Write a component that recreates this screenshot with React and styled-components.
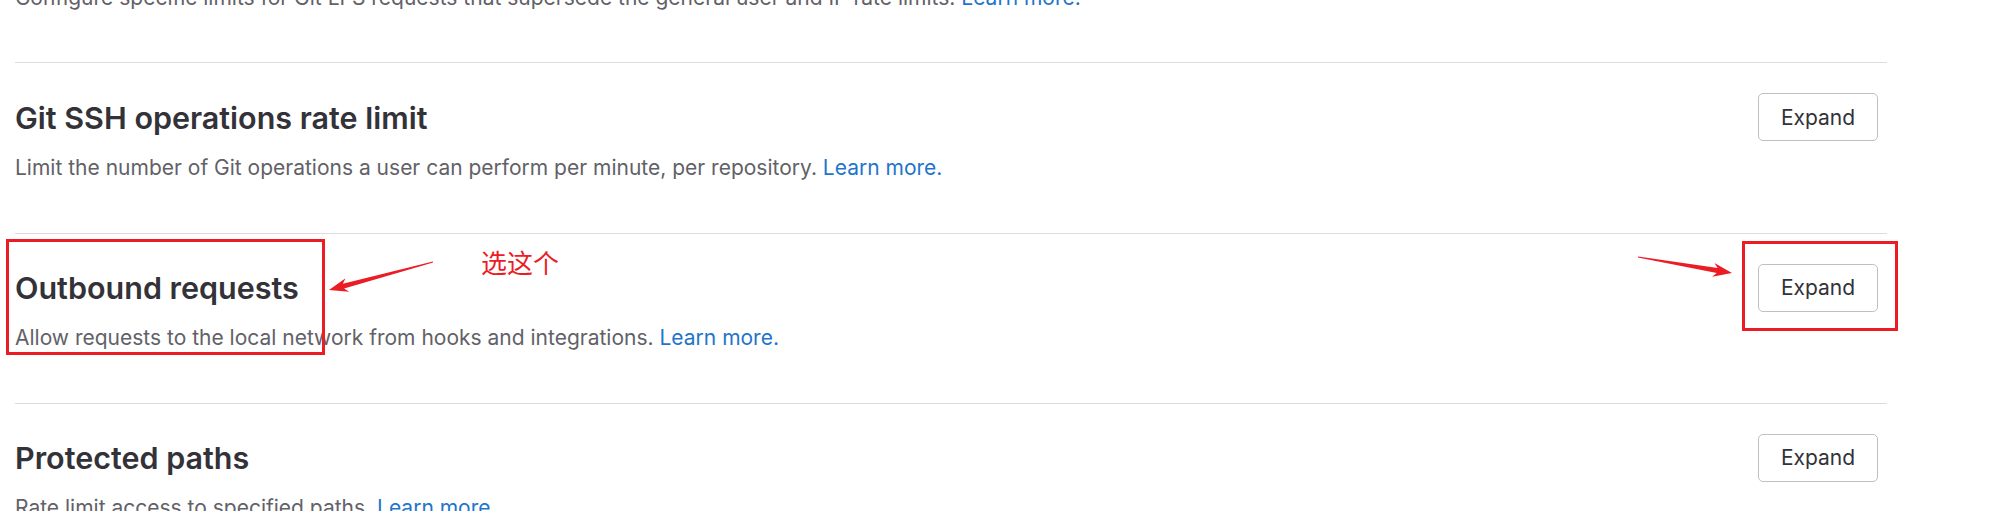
import React from "react";
import styled, { createGlobalStyle } from "styled-components";

const GlobalStyle = createGlobalStyle`
  html, body {
    margin: 0;
    padding: 0;
    background: #ffffff;
  }
  body {
    font-family: Inter, "Noto Sans", "Liberation Sans", sans-serif;
    overflow: hidden;
  }
`;

const Page = styled.div`
  position: relative;
  width: 1999px;
  height: 511px;
  overflow: hidden;
`;

const SectionList = styled.div`
  margin-top: -108px;
  margin-left: 15px;
  width: 1872px;
`;

const Section = styled.section`
  display: flex;
  justify-content: space-between;
  align-items: flex-start;
  border-top: 1px solid #dcdcde;
  padding: 30px 9px 49.8px 0;
`;

const Info = styled.div`
  display: flex;
  flex-direction: column;
`;

const Title = styled.h2`
  margin: 5.5px 0 0;
  font-size: 30.5px;
  line-height: 37.5px;
  font-weight: 600;
  color: #333238;
`;

const Description = styled.p`
  margin: 16.5px 0 0;
  font-size: 21px;
  line-height: 30px;
  color: #626168;
`;

const Link = styled.a`
  color: #1f75cb;
  text-decoration: none;
`;

const ExpandButton = styled.button`
  width: 120px;
  height: 48px;
  border: 1px solid #bfbfc3;
  border-radius: 5px;
  background: #ffffff;
  color: #333238;
  font-family: Inter, "Noto Sans", sans-serif;
  font-size: 21px;
  cursor: pointer;
`;

const RedBox = styled.div`
  position: absolute;
  left: ${p => p.x}px;
  top: ${p => p.y}px;
  width: ${p => p.w}px;
  height: ${p => p.h}px;
  border: 3px solid #ec1c24;
  box-sizing: border-box;
  pointer-events: none;
`;

const Note = styled.span`
  position: absolute;
  left: 481px;
  top: 247px;
  font-family: "Noto Sans CJK SC", "Noto Sans", sans-serif;
  font-size: 26px;
  line-height: 30px;
  color: #ec1c24;
`;

const Overlay = styled.svg`
  position: absolute;
  left: 0;
  top: 0;
  pointer-events: none;
`;

const sections = [
  {
    title: "Git LFS rate limits",
    text:
      "Configure specific limits for Git LFS requests that supersede the general user and IP rate limits.",
  },
  {
    title: "Git SSH operations rate limit",
    text:
      "Limit the number of Git operations a user can perform per minute, per repository.",
  },
  {
    title: "Outbound requests",
    text: "Allow requests to the local network from hooks and integrations.",
  },
  {
    title: "Protected paths",
    text: "Rate limit access to specified paths.",
  },
];

// tapered arrow like a screenshot tool draws it
const arrowPoints = (tx, ty, hx, hy) => {
  const len = Math.hypot(hx - tx, hy - ty);
  const dx = (hx - tx) / len;
  const dy = (hy - ty) / len;
  const nx = -dy;
  const ny = dx;
  const headLen = 15;
  const bx = hx - dx * headLen;
  const by = hy - dy * headLen;
  const cx = hx - dx * (headLen + 4);
  const cy = hy - dy * (headLen + 4);
  const pts = [
    [tx + nx * 0.5, ty + ny * 0.5],
    [bx + nx * 2.5, by + ny * 2.5],
    [cx + nx * 7, cy + ny * 7],
    [hx, hy],
    [cx - nx * 7, cy - ny * 7],
    [bx - nx * 2.5, by - ny * 2.5],
    [tx - nx * 0.5, ty - ny * 0.5],
  ];
  return pts.map(p => p.join(",")).join(" ");
};

export default function App() {
  return (
    <Page>
      <GlobalStyle />
      <SectionList>
        {sections.map(s => (
          <Section key={s.title}>
            <Info>
              <Title>{s.title}</Title>
              <Description>
                {s.text} <Link href="#">Learn more.</Link>
              </Description>
            </Info>
            <ExpandButton>Expand</ExpandButton>
          </Section>
        ))}
      </SectionList>

      <RedBox x={6} y={239} w={319} h={116} />
      <RedBox x={1742} y={241} w={156} h={90} />
      <Note>选这个</Note>
      <Overlay width="1999" height="511">
        <polygon points={arrowPoints(433, 262, 329, 290)} fill="#ec1c24" />
        <polygon points={arrowPoints(1638, 257, 1732, 273)} fill="#ec1c24" />
      </Overlay>
    </Page>
  );
}
